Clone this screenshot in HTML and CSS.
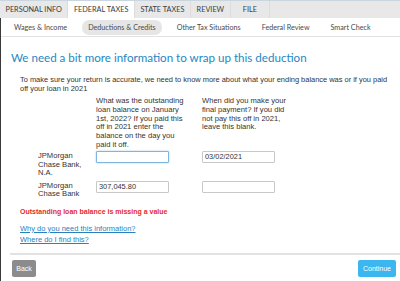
FILE: index.html
```html
<!DOCTYPE html>
<html lang="en">
<head>
    <meta charset="UTF-8">
    <meta name="viewport" content="width=device-width, initial-scale=1.0">
    <title>Deductions &amp; Credits</title>
    <link rel="stylesheet" href="styles.css">
</head>
<body>
    <div class="tabs">
        <span class="tab">PERSONAL INFO</span>
        <span class="tab active">FEDERAL TAXES</span>
        <span class="tab">STATE TAXES</span>
        <span class="tab review">REVIEW</span>
        <span class="tab file">FILE</span>
    </div>

    <div class="page">
        <div class="subtabs">
            <span class="subtab">Wages &amp; Income</span>
            <span class="subtab current">Deductions &amp; Credits</span>
            <span class="subtab">Other Tax Situations</span>
            <span class="subtab">Federal Review</span>
            <span class="subtab">Smart Check</span>
        </div>

        <div class="content">
            <h1>We need a bit more information to wrap up this deduction</h1>
            <p class="intro">To make sure your return is accurate, we need to know more about what your ending balance was or if you paid off your loan in 2021</p>

            <table class="loans">
                <tr>
                    <th></th>
                    <th>What was the outstanding loan balance on January 1st, 2022? If you paid this off in 2021 enter the balance on the day you paid it off.</th>
                    <th>When did you make your final payment? If you did not pay this off in 2021, leave this blank.</th>
                </tr>
                <tr>
                    <td class="lender">JPMorgan Chase Bank, N.A.</td>
                    <td><input type="text" class="field focused" value=""></td>
                    <td><input type="text" class="field" value="03/02/2021"></td>
                </tr>
                <tr>
                    <td class="lender">JPMorgan Chase Bank</td>
                    <td><input type="text" class="field" value="307,045.80"></td>
                    <td><input type="text" class="field" value=""></td>
                </tr>
            </table>

            <p class="error">Outstanding loan balance is missing a value</p>

            <div class="help">
                <a href="#">Why do you need this information?</a>
                <a href="#">Where do I find this?</a>
            </div>
        </div>

        <div class="actions">
            <button class="btn back">Back</button>
            <button class="btn continue">Continue</button>
        </div>
    </div>
</body>
</html>
```

FILE: styles.css
```css
*{
    box-sizing: border-box;
}
body{
    margin: 0;
    width: 400px;
    height: 281px;
    overflow: hidden;
    background-color: #fff;
    font-family: "Liberation Sans", Arial, sans-serif;
    color: #333;
}
.tabs{
    display: flex;
    height: 18px;
    background-color: #e8e8e8;
    border-top: 1px solid #c9d6df;
    font-family: Lato, "Open Sans", sans-serif;
    font-size: 7.3px;
    color: #3c3c3c;
}
.tab{
    display: flex;
    align-items: center;
    justify-content: center;
    padding: 0 5.5px;
    white-space: nowrap;
    border-right: 1px solid #dcdcdc;
}
.tab.active{
    background-color: #fff;
}
.tab.review{
    min-width: 40px;
}
.tab.file{
    min-width: 39px;
}
.page{
    height: 263px;
    border-left: 1px solid #3a3a3a;
}
.subtabs{
    display: flex;
    align-items: center;
    height: 19px;
    padding-left: 7px;
    border-bottom: 1px solid #e2e2e2;
    font-family: Lato, "Open Sans", sans-serif;
    font-size: 7.2px;
    color: #4a4a4a;
}
.subtab{
    padding: 3px 6px;
    margin-right: 9px;
    white-space: nowrap;
    border-radius: 7px;
}
.subtab.current{
    background-color: #e6e6e6;
}
.content{
    padding: 0 4px 0 10px;
}
h1{
    margin: 14px 0 0;
    font-family: Lato, "Open Sans", sans-serif;
    font-weight: 400;
    font-size: 11.6px;
    color: #1f87c4;
}
.intro{
    margin: 11px 0 0 9px;
    font-size: 7.45px;
    line-height: 9px;
}
.loans{
    border-collapse: collapse;
    margin: 4px 0 0 27px;
    font-size: 7.6px;
    line-height: 8.8px;
}
.loans th{
    font-weight: 400;
    text-align: left;
    vertical-align: top;
    padding: 0;
}
.loans th:nth-child(2){
    width: 106px;
    padding-right: 16px;
}
.loans th:nth-child(3){
    width: 90px;
}
.loans td{
    vertical-align: top;
    padding: 0 0 1.5px;
}
.loans td.lender{
    width: 58px;
    padding: 2px 4px 1.5px 0;
}
.field{
    display: block;
    width: 73px;
    height: 12px;
    margin: 1px 0 0;
    padding: 0 2px;
    border: 1px solid #c8c8c8;
    border-radius: 1px;
    font-family: "Liberation Sans", Arial, sans-serif;
    font-size: 7.4px;
    color: #333;
}
.field.focused{
    border-color: #7fb6e0;
    box-shadow: 0 0 2px #9cc9ec;
}
.error{
    margin: 6px 0 0 9px;
    font-size: 7px;
    line-height: 9px;
    font-weight: 700;
    color: #e52b2b;
}
.help{
    display: flex;
    flex-direction: column;
    align-items: flex-start;
    margin: 7px 0 0 9px;
    font-size: 7.5px;
    line-height: 11px;
}
.help a{
    color: #2a7fbf;
}
.actions{
    display: flex;
    justify-content: space-between;
    margin: 8px 0 0 9px;
    padding: 5px 4px 0 2px;
    border-top: 2px solid #e2e2e2;
}
.btn{
    height: 17px;
    border: none;
    border-radius: 2px;
    color: #fff;
    font-family: "Liberation Sans", Arial, sans-serif;
    font-size: 7px;
}
.back{
    width: 24px;
    padding: 0;
    background-color: #8c8c8c;
}
.continue{
    width: 38px;
    padding: 0;
    background-color: #3bb6ef;
}
```
